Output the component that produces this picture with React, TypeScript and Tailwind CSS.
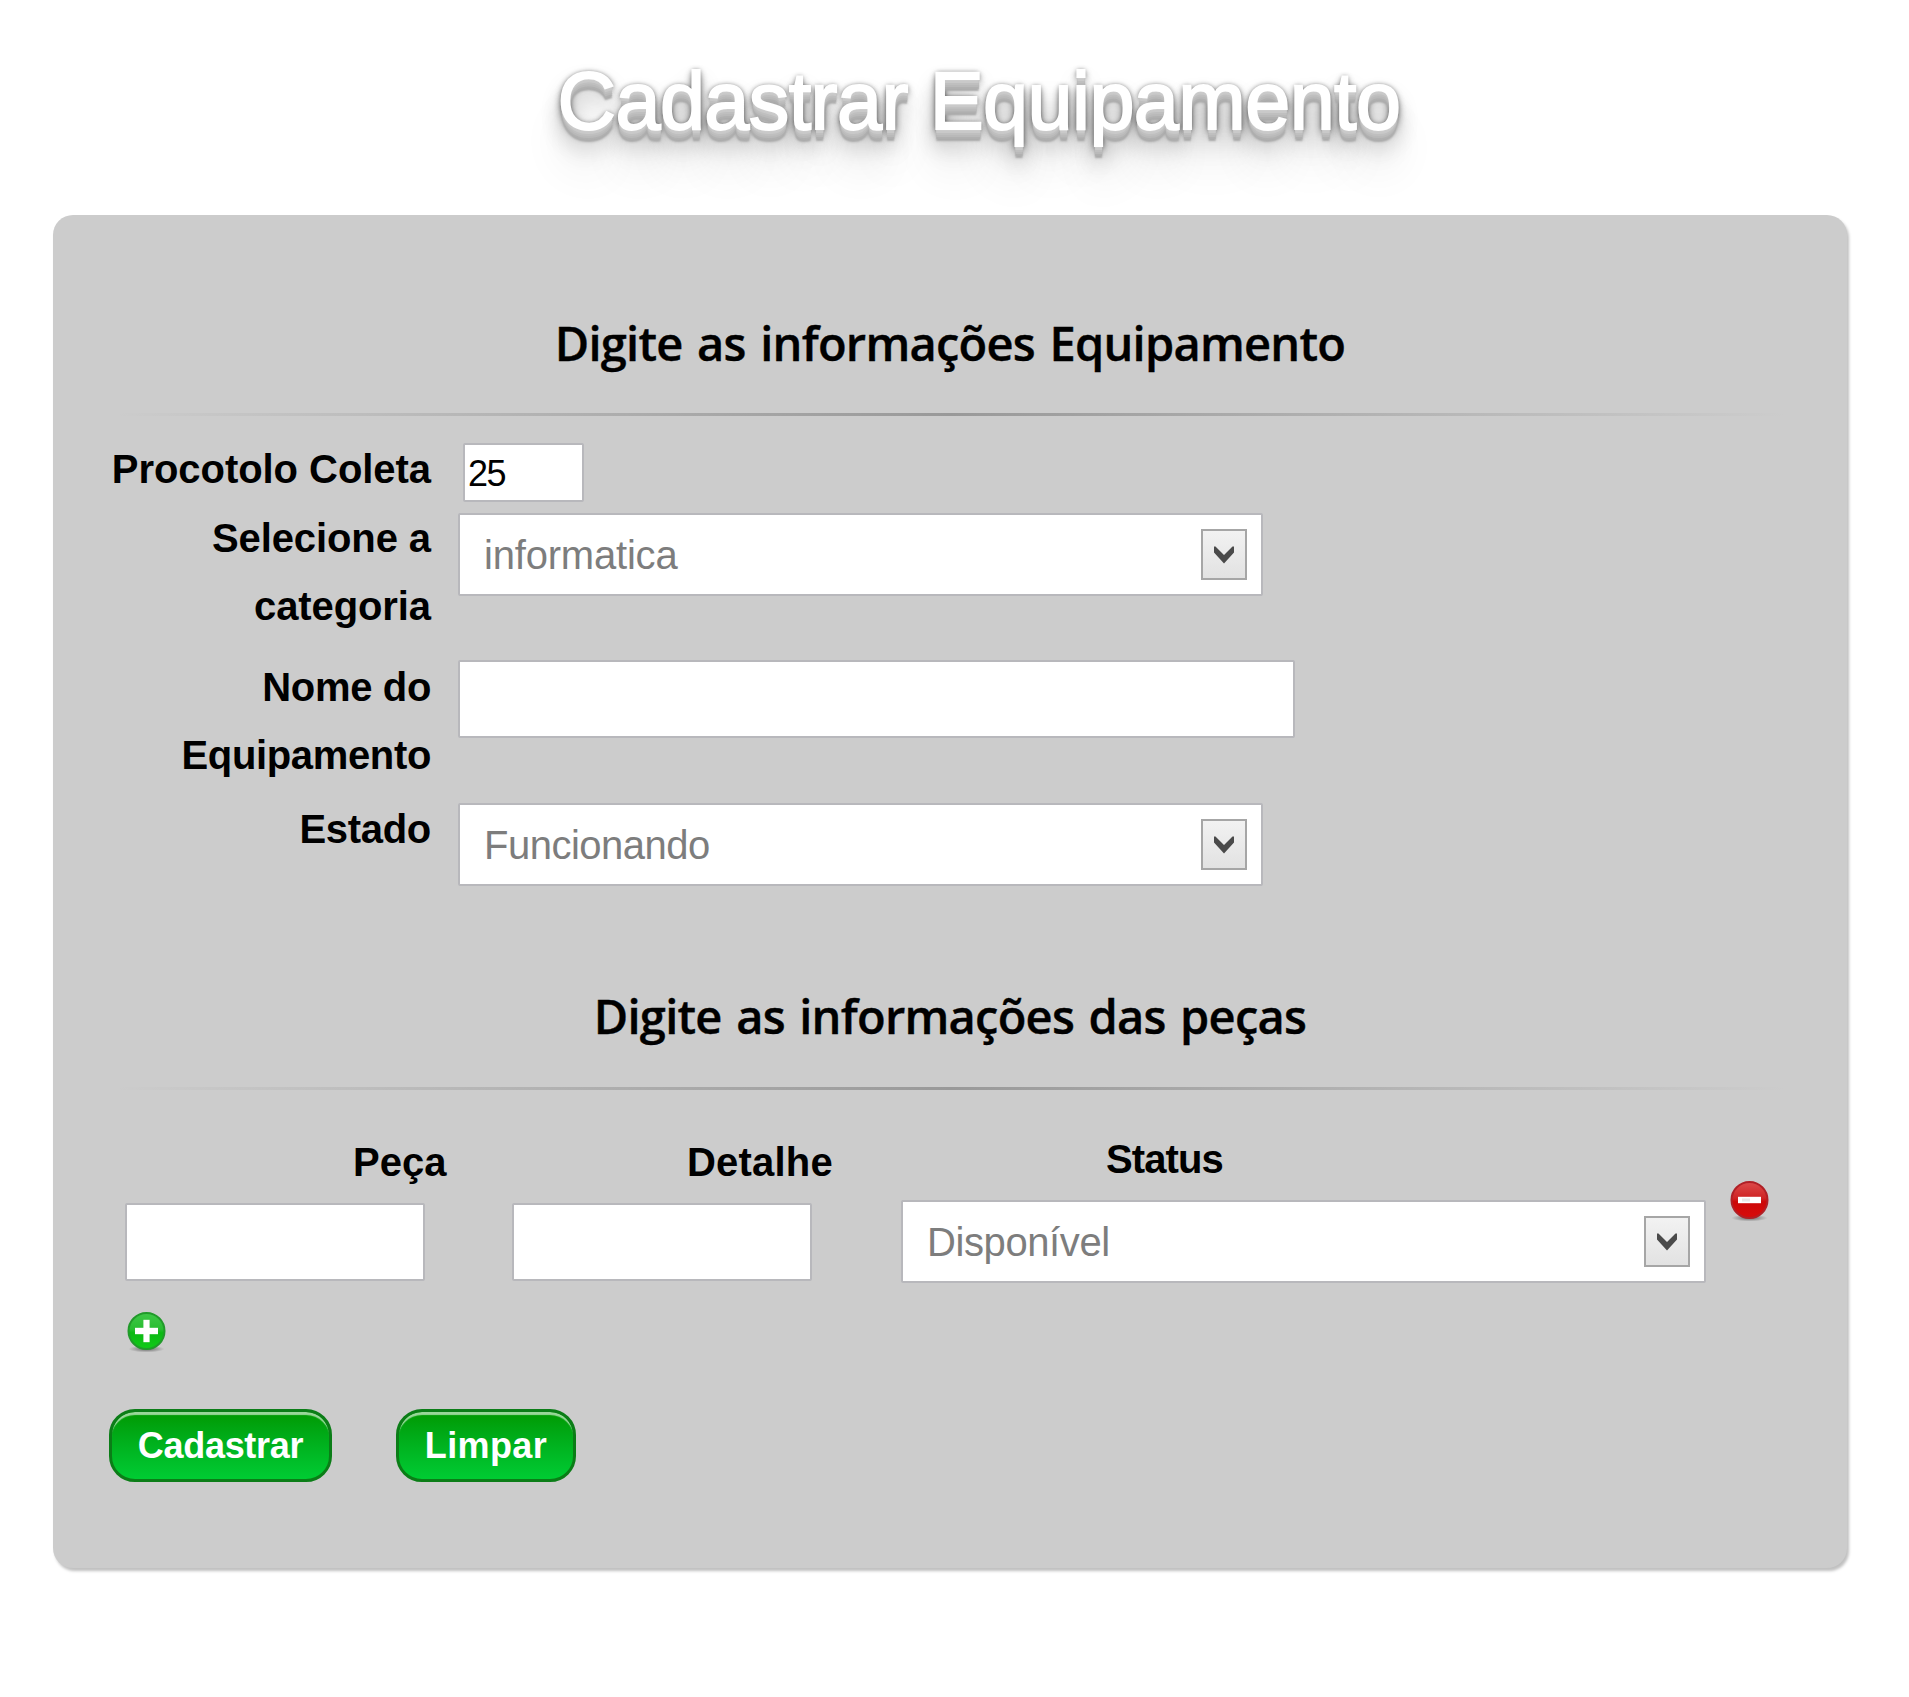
import type { ReactNode } from "react";

const box = "border-2 border-[#b8b8bc] bg-white rounded-[2px] outline-none";

function Heading({ children }: { children: ReactNode }) {
  return (
    <h2 className="h-[70px] pt-[2px] whitespace-nowrap text-center font-['Open_Sans',sans-serif] text-[47px] leading-[70px] font-semibold tracking-[-0.75px] [word-spacing:3px] text-black [-webkit-text-stroke:0.4px_black]">
      {children}
    </h2>
  );
}

function Divider({ className }: { className: string }) {
  return (
    <div
      className={`mx-[62px] h-[3px] bg-[linear-gradient(to_right,rgba(153,153,153,0),#999_50%,rgba(153,153,153,0))] ${className}`}
    />
  );
}

function Select({ value, className, textClass = "" }: { value: string; className: string; textClass?: string }) {
  return (
    <div className={`flex h-[83px] items-center justify-between pr-[14px] pl-[24px] ${box} ${className}`}>
      <span className={`text-[40px] leading-[46px] text-[#7d7d7d] ${textClass}`}>{value}</span>
      <span className="flex h-[51px] w-[46px] items-center justify-center border-2 border-[#a6a6a6] bg-gradient-to-b from-[#f2f2f2] to-[#e2e2e2]">
        <svg width="20" height="18" viewBox="0 0 20 18">
          <path d="M0 0.5 L1.5 0.5 L10 9 L18.5 0.5 L20 0.5 L20 6.5 L10 17.5 L0 6.5 Z" fill="#4a4a4a" />
        </svg>
      </span>
    </div>
  );
}

function Row({
  label,
  height,
  labelClass = "",
  children,
}: {
  label: ReactNode;
  height: string;
  labelClass?: string;
  children: ReactNode;
}) {
  return (
    <div className={`flex items-start ${height}`}>
      <label
        className={`w-[320px] whitespace-nowrap pt-[1px] text-right text-[40px] leading-[67.5px] font-bold ${labelClass}`}
      >
        {label}
      </label>
      {children}
    </div>
  );
}

function RoundIcon({ kind }: { kind: "add" | "remove" }) {
  const add = kind === "add";
  return (
    <svg width="40" height="42" viewBox="0 0 40 42" className="block">
      <defs>
        <linearGradient id={kind} x1="0" y1="0" x2="0" y2="1">
          <stop offset="0" stopColor={add ? "#3fc848" : "#dc4a4a"} />
          <stop offset="0.45" stopColor={add ? "#28bd30" : "#cf2424"} />
          <stop offset="0.55" stopColor={add ? "#0cb814" : "#cc0808"} />
          <stop offset="1" stopColor={add ? "#10cc18" : "#d80c0c"} />
        </linearGradient>
        <radialGradient id={`${kind}-shadow`}>
          <stop offset="0" stopColor="#000" stopOpacity="0.5" />
          <stop offset="1" stopColor="#000" stopOpacity="0" />
        </radialGradient>
      </defs>
      <ellipse cx="19.5" cy="38" rx="18" ry="3.5" fill={`url(#${kind}-shadow)`} />
      <circle cx="19.5" cy="20" r="18" fill={`url(#${kind})`} stroke={add ? "#219a2a" : "#b02026"} strokeWidth="2" />
      <rect x="8" y="16.8" width="23" height="6.4" fill="#fff" />
      {add && <rect x="16.4" y="8.8" width="6.2" height="22.4" fill="#fff" />}
      {!add && <rect x="12" y="18.5" width="8" height="3" fill="#e8e8e8" />}
    </svg>
  );
}

function Button({ children, className }: { children: ReactNode; className: string }) {
  return (
    <button
      type="button"
      className={`h-[73px] rounded-[26px] border-[3px] border-[#0b7d17] bg-gradient-to-b from-[#009900] to-[#00cc33] text-center text-[36px] leading-[40px] font-bold text-white shadow-[inset_0_4px_1px_-1px_rgba(255,255,255,0.6)] ${className}`}
    >
      {children}
    </button>
  );
}

export default function App() {
  return (
    <div className="h-[1697px] w-[1909px] overflow-hidden bg-white pt-[51px] font-['Liberation_Sans',Arial,sans-serif] text-black">
      <h1 className="ml-[554px] h-[100px] w-[850px] whitespace-nowrap text-center text-[81px] leading-[100px] font-normal tracking-[-0.6px] text-white [-webkit-text-stroke:2px_white] [text-shadow:0_2px_1px_#ccc,0_4px_0_#c9c9c9,0_6px_0_#bfbfbf,0_8px_0_#b9b9b9,0_10px_1px_#b0b0b0,0_12px_2px_#aaa,0_0_4px_rgba(0,0,0,0.4),0_2px_7px_rgba(0,0,0,0.45),0_6px_10px_rgba(0,0,0,0.3),0_12px_20px_rgba(0,0,0,0.25),0_22px_22px_rgba(0,0,0,0.16),0_40px_40px_rgba(0,0,0,0.14)]">
        Cadastrar Equipamento
      </h1>

      <form className="mt-[64px] ml-[53px] h-[1353px] w-[1794px] rounded-[20px] bg-[#ccc] pt-[91px] shadow-[2px_3px_3px_rgba(0,0,0,0.25)]">
        <Heading>Digite as informações Equipamento</Heading>
        <Divider className="mt-[37px]" />

        <div className="mt-[19px] pl-[58px]">
          <Row label="Procotolo Coleta" height="h-[69px]" labelClass="tracking-[-0.05px]">
            <input
              defaultValue="25"
              className={`mt-[8px] ml-[32px] h-[59px] w-[121px] pt-[2px] pl-[3px] text-[36px] tracking-[-1.5px] ${box}`}
            />
          </Row>
          <Row label={<>Selecione a<br />categoria</>} height="h-[149px]" labelClass="tracking-[-0.1px]">
            <Select value="informatica" className="mt-[9px] ml-[27px] w-[805px]" textClass="tracking-[-0.2px]" />
          </Row>
          <Row label={<>Nome do<br />Equipamento</>} height="h-[141px]" labelClass="tracking-[-0.35px]">
            <input className={`mt-[7px] ml-[27px] h-[78px] w-[837px] ${box}`} />
          </Row>
          <Row label="Estado" height="h-[185px]" labelClass="pt-[2px] tracking-[-0.3px]">
            <Select value="Funcionando" className="mt-[9px] ml-[27px] w-[805px]" textClass="tracking-[-0.5px]" />
          </Row>
        </div>

        <Heading>Digite as informações das peças</Heading>
        <Divider className="mt-[38px]" />

        <div className="mt-[35px] flex items-start pl-[72px] text-[40px] leading-[67.5px] font-bold">
          <div className="w-[387px] pt-[4px]">
            <label className="block h-[74px] pl-[228px]">Peça</label>
            <input className={`block h-[78px] w-[300px] ${box}`} />
          </div>
          <div className="w-[389px] pt-[4px]">
            <label className="block h-[74px] pl-[175px] tracking-[0.2px]">Detalhe</label>
            <input className={`block h-[78px] w-[300px] ${box}`} />
          </div>
          <div className="w-[829px]">
            <label className="block h-[75px] pt-[1px] pl-[205px] tracking-[-0.9px]">Status</label>
            <Select value="Disponível" className="w-[805px] font-normal" textClass="tracking-[-0.4px]" />
          </div>
          <button type="button" className="pt-[55px]">
            <RoundIcon kind="remove" />
          </button>
        </div>

        <button type="button" className="mt-[28px] ml-[74px] block">
          <RoundIcon kind="add" />
        </button>

        <div className="mt-[56px] ml-[56px] flex gap-[64px]">
          <Button className="w-[223px] tracking-[-0.3px]">Cadastrar</Button>
          <Button className="w-[180px] tracking-[0.4px]">Limpar</Button>
        </div>
      </form>
    </div>
  );
}
